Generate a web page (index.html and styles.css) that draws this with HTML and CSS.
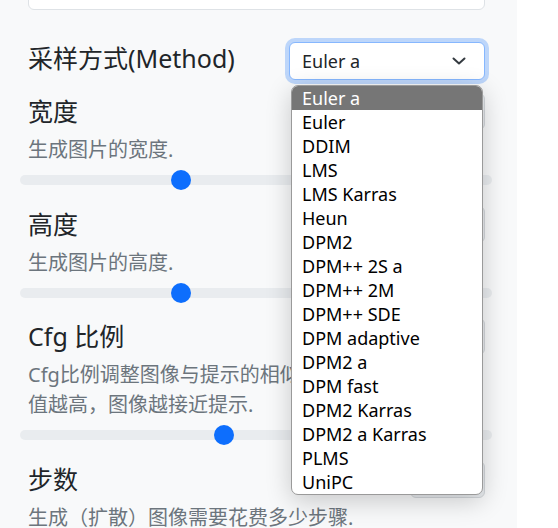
FILE: index.html
```html
<!DOCTYPE html>
<html lang="zh">
<head>
<meta charset="utf-8">
<title>采样设置</title>
<link rel="stylesheet" href="styles.css">
</head>
<body>
<div class="page">
  <div class="panel">
    <div class="prompt">A tiny puppy, a tall tree in a sunset, low_angle</div>

    <div class="method-row">
      <span class="label">采样方式(Method)</span>
      <div class="select-wrap">
        <div class="select">
          <span>Euler a</span>
          <svg class="chev" width="14" height="8" viewBox="0 0 14 8"><path d="M1.5 1.5 L7 6.5 L12.5 1.5" fill="none" stroke="#343a40" stroke-width="2" stroke-linecap="round" stroke-linejoin="round"/></svg>
        </div>
        <ul class="menu">
          <li class="active">Euler a</li>
          <li>Euler</li>
          <li>DDIM</li>
          <li>LMS</li>
          <li>LMS Karras</li>
          <li>Heun</li>
          <li>DPM2</li>
          <li>DPM++ 2S a</li>
          <li>DPM++ 2M</li>
          <li>DPM++ SDE</li>
          <li>DPM adaptive</li>
          <li>DPM2 a</li>
          <li>DPM fast</li>
          <li>DPM2 Karras</li>
          <li>DPM2 a Karras</li>
          <li>PLMS</li>
          <li>UniPC</li>
        </ul>
      </div>
    </div>

    <div class="field">
      <div class="field-head">
        <span class="label">宽度</span>
        <input class="num" type="text" value="512">
      </div>
      <div class="desc">生成图片的宽度.</div>
      <input class="range" type="range" min="256" max="1024" step="64" value="512">
    </div>

    <div class="field">
      <div class="field-head">
        <span class="label">高度</span>
        <input class="num" type="text" value="512">
      </div>
      <div class="desc">生成图片的高度.</div>
      <input class="range" type="range" min="256" max="1024" step="64" value="512">
    </div>

    <div class="field">
      <div class="field-head">
        <span class="label">Cfg 比例</span>
        <input class="num" type="text" value="7">
      </div>
      <div class="desc">Cfg比例调整图像与提示的相似程度，<br>值越高，图像越接近提示.</div>
      <input class="range" type="range" min="1" max="15" step="1" value="7">
    </div>

    <div class="field">
      <div class="field-head">
        <span class="label">步数</span>
        <input class="num" type="text" value="20">
      </div>
      <div class="desc">生成（扩散）图像需要花费多少步骤.</div>
      <input class="range" type="range" min="1" max="150" step="1" value="20">
    </div>
  </div>
</div>
</body>
</html>
```
FILE: styles.css
```css
html, body {
  margin: 0;
  padding: 0;
  background: #ffffff;
}

body {
  font-family: "Noto Sans", "Noto Sans CJK SC", sans-serif;
  color: #212529;
}

.page {
  width: 558px;
  height: 528px;
  overflow: hidden;
  background: #ffffff;
}

.panel {
  display: flow-root;
  width: 517px;
  height: 528px;
  box-sizing: border-box;
  padding: 0 32px 0 28px;
  background: #f8f9fa;
}

.prompt {
  margin-top: -30px;
  height: 40px;
  box-sizing: border-box;
  border: 1px solid #dee2e6;
  border-radius: 6px;
  background: #ffffff;
  padding: 0 12px;
  font-size: 20px;
  line-height: 30px;
  white-space: nowrap;
  overflow: hidden;
  color: #212529;
}

.method-row {
  margin-top: 32px;
  height: 38px;
  display: flex;
  align-items: baseline;
  justify-content: space-between;
}

.label {
  font-size: 25px;
  line-height: 30px;
  color: #212529;
}

.select-wrap {
  position: relative;
  width: 196px;
}

.select {
  height: 38px;
  box-sizing: border-box;
  border: 1px solid #86b7fe;
  border-radius: 6px;
  background: #ffffff;
  box-shadow: 0 0 0 4px rgba(13, 110, 253, 0.25);
  padding: 0 18px 0 12px;
  display: flex;
  align-items: center;
  justify-content: space-between;
  font-size: 18px;
  line-height: 24px;
  color: #212529;
}

.chev {
  display: block;
}

.menu {
  position: absolute;
  top: 43px;
  left: 2px;
  width: 192px;
  box-sizing: border-box;
  margin: 0;
  padding: 0;
  list-style: none;
  background: #ffffff;
  border: 1px solid #9a9a9a;
  border-radius: 7px;
  overflow: hidden;
  box-shadow: 0 6px 26px rgba(0, 0, 0, 0.2);
  z-index: 10;
}

.menu li {
  height: 24px;
  line-height: 24px;
  padding-left: 10px;
  font-size: 18px;
  color: #000000;
  white-space: nowrap;
}

.menu li.active {
  background: #767676;
  color: #ffffff;
}

.field {
  padding-bottom: 10.5px;
}

.method-row + .field {
  margin-top: 13px;
}

.field-head {
  height: 36px;
  display: flex;
  align-items: center;
  justify-content: space-between;
}

.num {
  width: 75px;
  height: 37px;
  box-sizing: border-box;
  border: 1px solid #d3d7db;
  border-radius: 6px;
  background: #e9ecef;
  padding: 0 10px;
  font-family: inherit;
  font-size: 18px;
  color: #212529;
  align-self: flex-start;
}

.desc {
  margin-top: 6px;
  font-size: 20px;
  line-height: 30px;
  color: #6c757d;
}

.range {
  -webkit-appearance: none;
  appearance: none;
  display: block;
  width: calc(100% + 15px);
  height: 30px;
  margin: 0 0 0 -8px;
  padding: 0;
  background: transparent;
}

.range::-webkit-slider-runnable-track {
  height: 10px;
  border-radius: 5px;
  background: #e9ecef;
}

.range::-webkit-slider-thumb {
  -webkit-appearance: none;
  appearance: none;
  width: 20px;
  height: 20px;
  margin-top: -5px;
  border: 0;
  border-radius: 50%;
  background: #0d6efd;
}
```
